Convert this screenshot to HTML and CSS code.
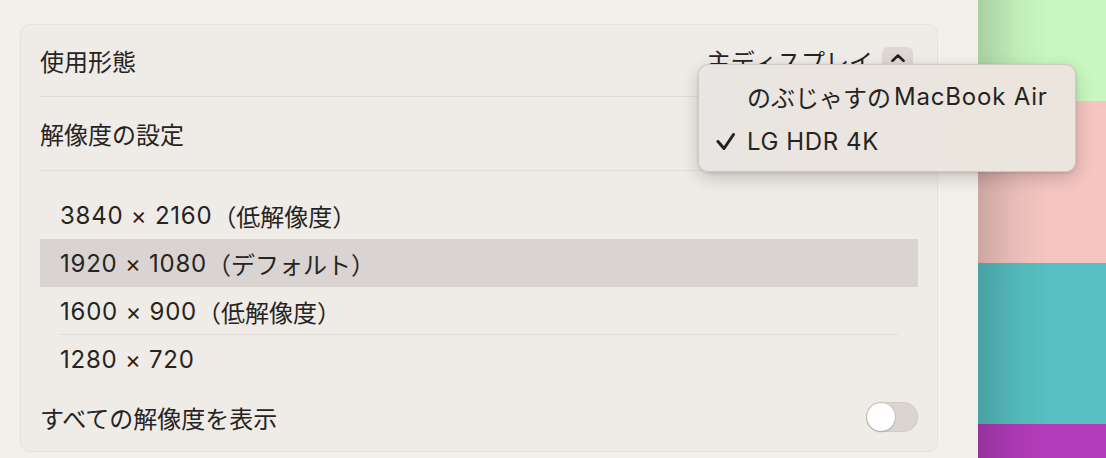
FILE: index.html
```html
<!DOCTYPE html>
<html lang="ja">
<head>
<meta charset="utf-8">
<link rel="stylesheet" href="styles.css">
</head>
<body>
<div class="screen">
  <div class="pane">
    <div class="card">
      <div class="row row-first">
        <span class="label">使用形態</span>
        <div class="select">
          <span class="select-value">主ディスプレイ</span>
          <span class="select-btn">
            <svg width="14" height="8" viewBox="0 0 14 8"><polyline points="1.5,6.8 7,1.5 12.5,6.8" fill="none" stroke="#222" stroke-width="2.6" stroke-linecap="round" stroke-linejoin="round"/></svg>
          </span>
        </div>
      </div>
      <div class="row row-second">
        <span class="label">解像度の設定</span>
      </div>
      <ul class="list">
        <li class="item"><span class="num">3840 × 2160</span>（低解像度）</li>
        <li class="item selected"><span class="num">1920 × 1080</span>（デフォルト）</li>
        <li class="item sep"><span class="num">1600 × 900</span>（低解像度）</li>
        <li class="item"><span class="num">1280 × 720</span></li>
      </ul>
      <div class="row row-last">
        <span class="label">すべての解像度を表示</span>
        <span class="toggle"><span class="knob"></span></span>
      </div>
    </div>
  </div>
  <div class="strip">
    <div class="band green"></div>
    <div class="band pink"></div>
    <div class="band teal"></div>
    <div class="band purple"></div>
  </div>
  <div class="menu">
    <div class="menu-item"><span class="check"></span><span>のぶじゃすの</span><span class="latin mac">MacBook Air</span></div>
    <div class="menu-item"><span class="check">
      <svg width="20" height="18" viewBox="0 0 20 18"><polyline points="2,8.5 8,15.5 17.5,1.5" fill="none" stroke="#222" stroke-width="3" stroke-linecap="round" stroke-linejoin="round"/></svg>
    </span><span class="latin">LG HDR 4K</span></div>
  </div>
</div>
</body>
</html>
```

FILE: styles.css
```css
* { box-sizing: border-box; }
html, body { margin: 0; padding: 0; }
body {
  width: 1106px;
  height: 458px;
  overflow: hidden;
  background: #f3efeb;
  font-family: Inter, "Noto Sans CJK JP", sans-serif;
  color: #262422;
  font-size: 24px;
}
.screen {
  position: relative;
  display: flex;
  width: 1106px;
  height: 458px;
}
.pane {
  width: 978px;
  padding: 24px 40px 0 20px;
}
.card {
  width: 918px;
  height: 428px;
  background: #efebe7;
  border: 1px solid #e6e1dc;
  border-radius: 10px;
  padding: 0 19px;
  display: flex;
  flex-direction: column;
}
.row {
  display: flex;
  align-items: center;
  justify-content: space-between;
}
.row-first {
  height: 72px;
  border-bottom: 1px solid #e2ddd8;
}
.row-second {
  height: 74px;
  border-bottom: 1px solid #e2ddd8;
}
.row-last {
  flex: 1;
}
.select {
  display: flex;
  align-items: center;
  gap: 9px;
  margin-right: 5px;
}
.select-btn {
  width: 31px;
  height: 28px;
  border-radius: 6px;
  background: #ddd8d4;
  display: flex;
  align-items: center;
  justify-content: center;
  padding-bottom: 6px;
}
.list {
  list-style: none;
  margin: 20px 0 0;
  padding: 0;
}
.item {
  height: 48px;
  display: flex;
  align-items: center;
  padding-left: 20px;
  position: relative;
}
.num {
  letter-spacing: 0.75px;
}
.item.selected {
  background: #d9d4d1;
}
.item.sep::after {
  content: "";
  position: absolute;
  left: 20px;
  right: 20px;
  bottom: 0;
  height: 1px;
  background: #e2ddd8;
}
.toggle {
  width: 52px;
  height: 30px;
  border-radius: 15px;
  background: #dad5d1;
  box-shadow: inset 0 0 0 1px #d2ccc8;
  padding: 1px;
  display: flex;
  align-items: center;
}
.knob {
  width: 28px;
  height: 28px;
  border-radius: 50%;
  background: #fff;
  box-shadow: 0 0.5px 2px rgba(0,0,0,0.35);
}
.strip {
  width: 128px;
  height: 458px;
  display: flex;
  flex-direction: column;
  position: relative;
}
.strip::after {
  content: "";
  position: absolute;
  inset: 0;
  background: linear-gradient(to right, rgba(0,0,0,0.16), rgba(0,0,0,0.04) 40px, rgba(0,0,0,0) 70px);
}
.band.green { height: 101px; background: #c8f7c0; }
.band.pink { height: 162px; background: #f4c5c1; }
.band.teal { height: 161px; background: #56bfc1; }
.band.purple { flex: 1; background: #b33cbb; }
.menu {
  position: absolute;
  left: 698px;
  top: 64px;
  width: 378px;
  height: 108px;
  border-radius: 10px;
  background: linear-gradient(to right, #e9e5e2, #ece5dd);
  border: 1px solid rgba(0,0,0,0.12);
  box-shadow: 0 6px 18px rgba(0,0,0,0.18), 0 1px 3px rgba(0,0,0,0.12);
  padding: 9px 0 8px;
  font-size: 24px;
}
.menu-item {
  height: 45px;
  display: flex;
  align-items: center;
}
.latin {
  letter-spacing: 0.6px;
}
.latin.mac {
  margin-left: 3px;
  letter-spacing: 0.8px;
}
.check {
  width: 48px;
  padding-left: 17px;
  display: flex;
  align-items: center;
}
```
